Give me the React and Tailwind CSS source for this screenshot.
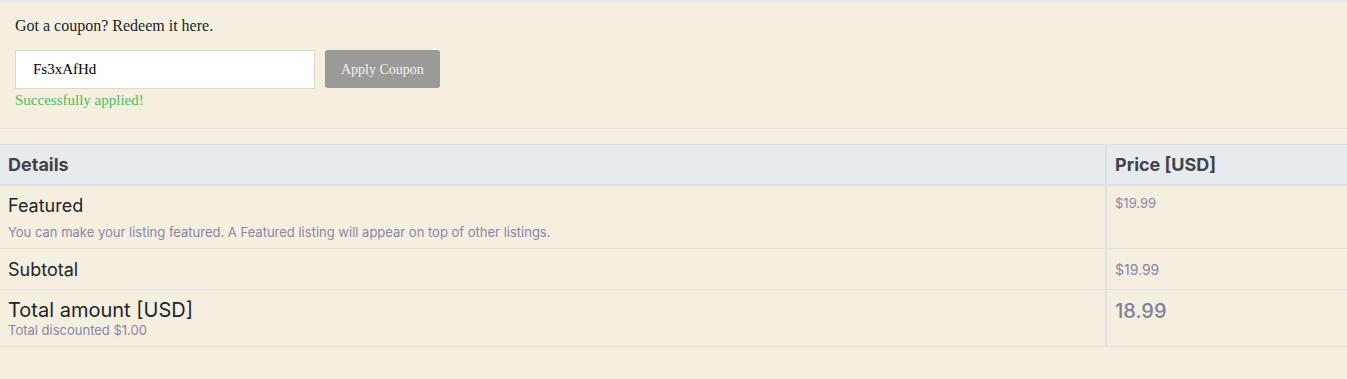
import React, { useState } from 'react';

const rows = [
  { id: 1, title: 'Featured', note: 'You can make your listing featured. A Featured listing will appear on top of other listings.', price: '$19.99' },
];

const App = () => {
  const [code, setCode] = useState('Fs3xAfHd');

  return (
    <div className="min-h-[379px] bg-[#f5efe0] font-['Inter',sans-serif]">
      <div className="border-t-2 border-b border-[#e6e7ea] px-[15px] pt-[14px] pb-[18px] font-['Liberation_Serif',serif]">
        <p className="text-[16px] leading-[20px] text-[#212529]">Got a coupon? Redeem it here.</p>
        <div className="mt-[14px] flex items-start gap-[10px]">
          <input
            value={code}
            onChange={(e) => setCode(e.target.value)}
            className="h-[39px] w-[300px] border border-[#ddd8c8] bg-white px-[17px] text-[15px] text-black outline-none"
          />
          <button className="h-[38px] rounded-[3px] bg-[#9b9a98] px-[16px] text-[14px] text-[#f3f3f3]">
            Apply Coupon
          </button>
        </div>
        <p className="mt-[1px] text-[15px] leading-[20px] text-[#3ec35e]">Successfully applied!</p>
      </div>

      <table className="mt-[15px] w-full border-collapse text-left">
        <thead>
          <tr className="bg-[#e8ebee] border-t border-b-2 border-[#dde1e6]">
            <th className="h-[40px] px-[8px] text-[18px] font-bold text-[#3f444b]">Details</th>
            <th className="w-[241px] border-l-2 border-[#dde1e6] px-[8px] text-[18px] font-bold text-[#3f444b]">Price [USD]</th>
          </tr>
        </thead>
        <tbody>
          {rows.map((r) => (
            <tr key={r.id} className="border-b border-[#dde1e6]">
              <td className="h-[64px] px-[8px] align-top pt-[8px]">
                <div className="text-[18px] leading-[24px] text-[#212529]">{r.title}</div>
                <div className="mt-[5px] text-[13px] leading-[18px] text-[#8b84a3]">{r.note}</div>
              </td>
              <td className="border-l-2 border-[#dde1e6] px-[8px] pt-[9px] align-top text-[13px] leading-[16px] text-[#8b84a3]">{r.price}</td>
            </tr>
          ))}
          <tr className="border-b border-[#dde1e6]">
            <td className="h-[41px] px-[8px] text-[18px] text-[#212529]">Subtotal</td>
            <td className="border-l-2 border-[#dde1e6] px-[8px] text-[14px] text-[#8b84a3]">$19.99</td>
          </tr>
          <tr className="border-b border-[#dde1e6]">
            <td className="h-[57px] px-[8px] align-top pt-[7px]">
              <div className="text-[20px] leading-[26px] text-[#212529]">Total amount [USD]</div>
              <div className="text-[13px] leading-[14px] text-[#8b84a3]">Total discounted $1.00</div>
            </td>
            <td className="border-l-2 border-[#dde1e6] px-[8px] pt-[8px] align-top text-[20px] font-medium leading-[26px] text-[#7d7f9f]">18.99</td>
          </tr>
        </tbody>
      </table>
    </div>
  );
};

export default App;
